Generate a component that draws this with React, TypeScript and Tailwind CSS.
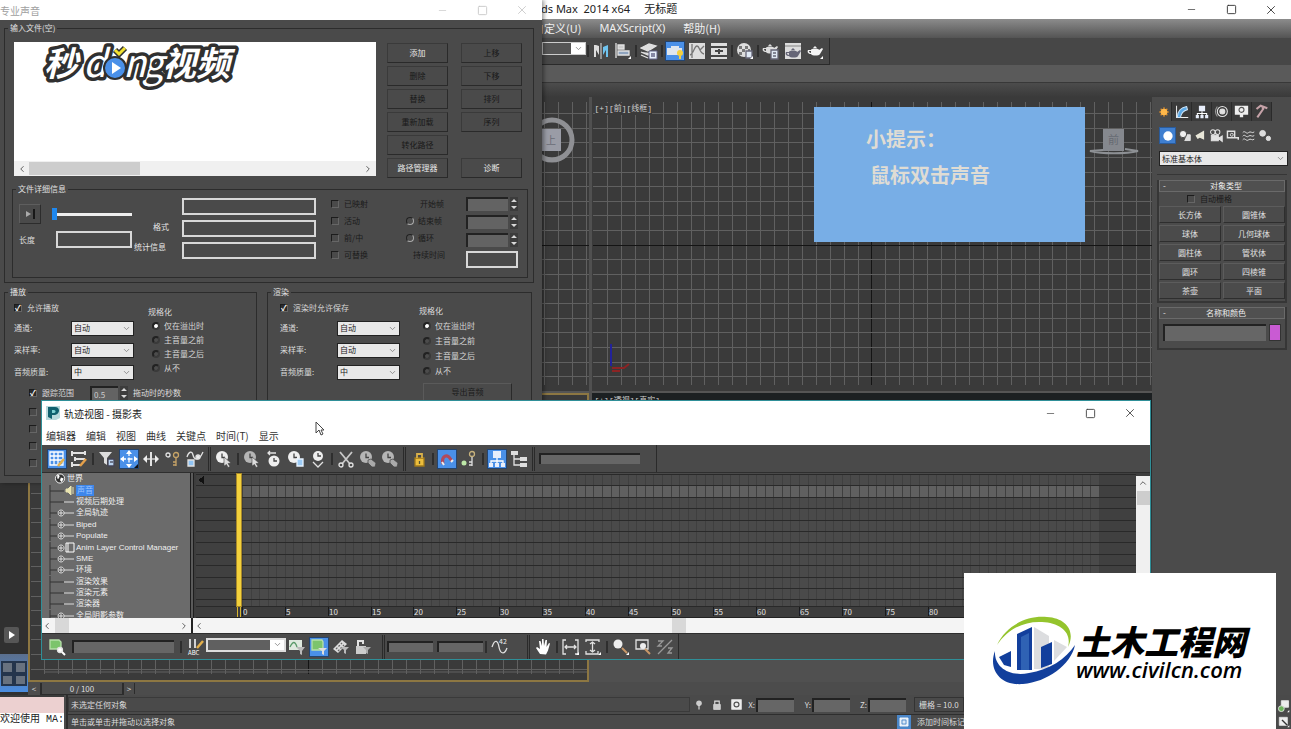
import type { ReactNode } from "react";
import { clsx } from "clsx";
import { ChevronDown, ChevronLeft, ChevronRight, ChevronUp, Minus, Square, X } from "lucide-react";

// ---------------------------------------------------------------------------
// Shared controls
// ---------------------------------------------------------------------------

function Icon({ children, size = 18 }: { children: ReactNode; size?: number }) {
  return (
    <svg width={size} height={size} viewBox="0 0 18 18" fill="none" stroke="#e2e2e2" strokeWidth="1.3" className="shrink-0">
      {children}
    </svg>
  );
}

function ToolButton({ label, active, children }: { label: string; active?: boolean; children: ReactNode }) {
  return (
    <button aria-label={label} title={label} className="flex h-5 w-[22px] shrink-0 items-center justify-center">
      <span className={clsx("flex h-5 w-5 items-center justify-center", active && "border border-[#24446e] bg-[#4a90e8]")}>
        {children}
      </span>
    </button>
  );
}

function Sep({ tight }: { tight?: boolean }) {
  return <span className={clsx("h-3 w-[2px] shrink-0 bg-[#2e2e2e]", tight ? "mx-[1px]" : "mx-[2px]")} />;
}

function Grip() {
  return <span className="mx-[2px] h-6 w-[3px] shrink-0 border-x border-[#2a2a2a]" />;
}

function Check({ label, checked, dim }: { label: string; checked?: boolean; dim?: boolean }) {
  return (
    <label className={clsx("flex items-center gap-[5px] whitespace-nowrap", dim ? "text-[#1a1a1a]" : "text-[#d6d6d6]")}>
      <input
        type="checkbox"
        defaultChecked={checked}
        aria-label={label || "选项"}
        className="flex h-[8px] w-[8px] shrink-0 appearance-none items-center justify-center border border-r-[#666] border-b-[#666] border-t-[#1c1c1c] border-l-[#1c1c1c] text-[8px] leading-none font-bold text-white checked:bg-[#2b2b2b] checked:after:content-['✓']"
      />
      {label}
    </label>
  );
}

function Radio({ name, label, checked, dim }: { name: string; label: string; checked?: boolean; dim?: boolean }) {
  return (
    <label className={clsx("flex items-center gap-1 whitespace-nowrap", dim ? "text-[#1a1a1a]" : "text-[#d6d6d6]")}>
      <input
        type="radio"
        name={name}
        defaultChecked={checked}
        className={clsx(
          "h-[8px] w-[8px] shrink-0 appearance-none rounded-full checked:bg-white",
          dim
            ? "border border-[#aaa] border-t-[#222] border-l-[#222] bg-[#4c4c4c]"
            : "border-2 border-[#3a3a3a] border-t-[#222] border-l-[#222] bg-[#4c4c4c]",
        )}
      />
      {label}
    </label>
  );
}

function Select({ label, value, className }: { label: string; value: string; className?: string }) {
  return (
    <span className={clsx("relative flex border border-[#222] bg-[#e8e8e8] text-[#222]", className)}>
      <select aria-label={label} className="w-full appearance-none pl-[2px]">
        <option>{value}</option>
      </select>
      <ChevronDown size={9} className="pointer-events-none absolute right-[2px] top-[2px] text-[#777]" />
    </span>
  );
}

function Box({ label, className }: { label: string; className?: string }) {
  return <input aria-label={label} className={clsx("border-t-2 border-l-2 border-[#222] bg-[#666]", className)} />;
}

function Spinner({ label, value, className }: { label: string; value?: string; className?: string }) {
  return (
    <span className="flex items-center gap-[2px]">
      <input
        aria-label={label}
        defaultValue={value}
        className={clsx("h-[14px] border-t-2 border-l-2 border-[#222] bg-[#636363] pl-[2px] text-[#ccc]", className)}
      />
      <svg width="8" height="14" viewBox="0 0 8 14" fill="#d8d8d8">
        <path d="M0 0h8v14H0Z" fill="#3c3c3c" />
        <path d="M4 2 7 5H1ZM4 12 1 9h6Z" />
      </svg>
    </span>
  );
}

function Group({ title, className, children }: { title: string; className?: string; children: ReactNode }) {
  return (
    <fieldset className={clsx("border border-[#2c2c2c]", className)}>
      <legend className="ml-[3px] px-[2px] leading-[12px] text-[#e0e0e0]">{title}</legend>
      {children}
    </fieldset>
  );
}

function WindowButtons({ className }: { className: string }) {
  return (
    <div className={clsx("flex items-center", className)}>
      <button aria-label="最小化" className="flex w-[40px] justify-center"><Minus size={11} strokeWidth={1.5} /></button>
      <button aria-label="最大化" className="flex w-[40px] justify-center"><Square size={11} strokeWidth={2} /></button>
      <button aria-label="关闭" className="flex w-[40px] justify-center"><X size={14} strokeWidth={1.5} /></button>
    </div>
  );
}

// ---------------------------------------------------------------------------
// Glyphs
// ---------------------------------------------------------------------------

const corner = <path d="M17 14v3h-3Z" fill="#fff" stroke="none" />;

function Clock({ dim, children }: { dim?: boolean; children?: ReactNode }) {
  return (
    <Icon>
      <circle cx="7" cy="7" r="6" fill={dim ? "#b5b5b5" : "#f0f0f0"} stroke="none" />
      <path d="M7 3.500V7.500H10" stroke="#444" />
      {children}
    </Icon>
  );
}

const pointer = <path d="m9 7 7 6-3 .5 2 3-2 1-1.500-3L9 16Z" fill="#ddd" stroke="#444" strokeWidth=".6" />;
const link = <path d="m9 10 3-1 5 4-1 4h-3l-4-4Z" fill="#aaa" stroke="#444" strokeWidth=".7" />;

const Teapot = ({ fill = "#ddd" }: { fill?: string }) => (
  <path
    d="M5 8c0-2 8-2 8 0l3-2 1 1-3 5c-1 2-8 2-9 0C2 12 1 10 2 8Zm-2 1c0 1 1 2 2 2V9Zm4-3 2-2 2 2Z"
    fill={fill}
    stroke="none"
  />
);

const Hierarchy = ({ size = 18 }: { size?: number }) => (
  <Icon size={size}>
    <path d="M9 8v3M3 14v-3h12v3M9 11v3" stroke="#fff" />
    <path d="M5 1h8v7H5ZM1 13h4v4H1ZM7 13h4v4H7ZM13 13h4v4h-4Z" fill="#e8eefb" stroke="none" />
  </Icon>
);

// ---------------------------------------------------------------------------
// Viewports
// ---------------------------------------------------------------------------

interface GridProps {
  x0: number;
  y0: number;
  axisX?: number;
  axisY?: number;
}

function GridLines({ x0, y0, axisX, axisY }: GridProps) {
  const lines = Array.from({ length: 41 }, (_, i) => i);
  return (
    <svg className="absolute inset-0 h-full w-full" shapeRendering="crispEdges">
      {lines.map((i) => {
        const x = Math.round(x0 + i * 13.92);
        return <line key={i} x1={x} x2={x} y1="5" y2="98%" stroke={i === axisX ? "#141414" : "#606060"} />;
      })}
      {lines.slice(0, 21).map((i) => {
        const y = Math.round(y0 + i * 14.63);
        return <line key={i} x1="1" x2="100%" y1={y} y2={y} stroke={i === axisY ? "#141414" : "#606060"} />;
      })}
    </svg>
  );
}

function Viewports() {
  return (
    <div className="grid min-h-0 flex-1 grid-cols-2 grid-rows-[296fr_289fr] gap-x-[3px] bg-[#505050]">
      <div className="relative overflow-hidden border-b-2 border-[#555] bg-[#3a3a3a]">
        <GridLines x0={15} y0={16} axisY={9} />
        <svg className="absolute top-[20px] right-[14px]" width="46" height="46" viewBox="0 0 46 46">
          <circle cx="23" cy="23" r="20" fill="none" stroke="#8f9094" strokeWidth="5" />
          <rect x="11" y="12" width="21" height="22" fill="#9a9ca6" />
          <text x="17" y="27" fontSize="10" fill="#6a6c76">上</text>
        </svg>
      </div>
      <div className="relative overflow-hidden border-b-2 border-[#555] bg-[#3a3a3a]">
        <GridLines x0={15} y0={16} axisX={19} axisY={9} />
        <p className="relative mt-[6px] ml-[3px] w-fit bg-[#3a3a3a] font-['Liberation_Mono','Noto_Sans_CJK_SC',monospace] text-[8px] leading-[12px] text-[#cfcfcf]">
          [+][前][线框]
        </p>
        <svg className="absolute bottom-[18px] left-[14px]" width="28" height="30" viewBox="0 0 28 30" fill="none">
          <path d="M5 1v22" stroke="#22229a" strokeWidth="2" />
          <path d="M6 25h12l5-4M6 28h8" stroke="#8c2424" strokeWidth="2" />
        </svg>
        <svg className="absolute top-[30px] right-[12px]" width="52" height="28" viewBox="0 0 52 28">
          <rect x="15" y="2" width="21" height="22" fill="#85888e" />
          <text x="20" y="17" fontSize="11" fill="#666a72">前</text>
          <path d="M15 23 2 24c12 3 36 3 48 0l-13-2" fill="none" stroke="#8d9094" strokeWidth="2" />
        </svg>
      </div>
      <div className="relative overflow-hidden border-2 border-[#8d7742] bg-[#3a3a3a]">
        <GridLines x0={14} y0={25} axisX={19} />
        <svg className="absolute inset-x-0 bottom-0 h-[20px] w-full">
          <path d="M14 12H560" stroke="#606060" />
        </svg>
      </div>
      <div className="overflow-hidden bg-[linear-gradient(#1c2022_8px,#505050_260px)] pl-[3px]">
        <p className="font-['Liberation_Mono','Noto_Sans_CJK_SC',monospace] text-[8px] leading-[16px] text-[#cfcfcf]">
          [+][透视][真实]
        </p>
      </div>
    </div>
  );
}

// ---------------------------------------------------------------------------
// Command panel on the right
// ---------------------------------------------------------------------------

const PRIMITIVES = ["长方体", "圆锥体", "球体", "几何球体", "圆柱体", "管状体", "圆环", "四棱锥", "茶壶", "平面"];

function Rollout({ title, children }: { title: string; children: ReactNode }) {
  return (
    <section className="relative border-x-2 border-b-2 border-[#363636] pb-[2px]">
      <h2 className="flex h-[12px] items-center border border-[#6a6a6a] bg-[#505050] px-[3px] leading-[10px] text-[#ededed]">
        <span className="w-2">-</span>
        <span className="flex-1 text-center">{title}</span>
      </h2>
      {children}
    </section>
  );
}

function PanelTab({ label, active, children }: { label: string; active?: boolean; children: ReactNode }) {
  return (
    <button
      aria-label={label}
      className={clsx("flex items-center justify-center border-r border-[#2a2a2a]", active ? "w-[15px] bg-[#4b4b4b]" : "w-5 bg-[#3b3b3b]")}
    >
      {children}
    </button>
  );
}

function CommandPanel() {
  return (
    <aside className="flex w-[139px] shrink-0 flex-col bg-[#4b4b4b] pt-[5px] pr-[4px] pl-[5px]">
      <div className="flex h-[19px]">
        <PanelTab label="创建" active>
          <Icon size={12}>
            <path d="M9 2v14M2 9h14M4 4l10 10M14 4 4 14" stroke="#d98a2a" strokeWidth="2" />
            <circle cx="9" cy="9" r="5" fill="#ffb84a" stroke="none" />
          </Icon>
        </PanelTab>
        <PanelTab label="修改">
          <Icon size={14}>
            <path d="M2 1v15h15" stroke="#eee" />
            <path d="M3 16C3 8 8 3 15 2l1 4c-4 1-8 4-9 10Z" fill="#5aa8e6" stroke="#cfe4f7" />
          </Icon>
        </PanelTab>
        <PanelTab label="层次"><Hierarchy size={14} /></PanelTab>
        <PanelTab label="运动">
          <Icon size={15}>
            <circle cx="10" cy="9" r="6" />
            <circle cx="10" cy="9" r="3" fill="#e2e2e2" />
            <path d="M4 3c-3 4-3 8 0 12" stroke="#999" />
          </Icon>
        </PanelTab>
        <PanelTab label="显示">
          <Icon size={15}>
            <path d="M1 2h16v11h-6v3H7v-3H1Z" fill="#eee" stroke="none" />
            <circle cx="9" cy="7" r="3" stroke="#555" />
          </Icon>
        </PanelTab>
        <PanelTab label="工具">
          <Icon size={15}>
            <path d="m3 6 5-4 8 3M10 4l1 2L4 16" stroke="#c5a2a8" strokeWidth="2.500" />
          </Icon>
        </PanelTab>
      </div>

      <div className="mt-[6px] ml-[2px] flex">
        <button aria-label="几何体" className="flex h-[17px] w-[17px] items-center justify-center border border-[#2a5b9b] bg-[#3f7fd0]">
          <Icon size={14}><circle cx="9" cy="9" r="6" fill="#fff" stroke="none" /></Icon>
        </button>
        <button aria-label="图形" className="flex w-[16px] items-center justify-center">
          <Icon size={13}><path d="M12 8h5v8H9" fill="#ddd" /><circle cx="7" cy="7" r="5" fill="#eee" stroke="#444" /></Icon>
        </button>
        <button aria-label="灯光" className="flex w-[16px] items-center justify-center">
          <Icon size={13}><path d="M2 9 14 2v13L8 12l-3 2Z" fill="#e8e6d8" stroke="none" /></Icon>
        </button>
        <button aria-label="摄影机" className="flex w-[16px] items-center justify-center">
          <Icon size={14}><circle cx="5" cy="4" r="3" /><circle cx="11" cy="4" r="3" /><path d="M3 8h9v7H3Zm9 4 5-3v7Z" fill="#e2e2e2" /></Icon>
        </button>
        <button aria-label="辅助对象" className="flex w-[16px] items-center justify-center">
          <Icon size={13}><path d="M2 3h10v9H2Zm5 9h10v3" strokeWidth="2" /><circle cx="8" cy="8" r="2" /></Icon>
        </button>
        <button aria-label="空间扭曲" className="flex w-[17px] items-center justify-center">
          <Icon size={13}><path d="M1 5c3-4 5 3 8 0s5 2 8-1M1 10c3-4 5 3 8 0s5 2 8-1M1 15c3-4 5 3 8 0s5 2 8-1" /></Icon>
        </button>
        <button aria-label="系统" className="flex w-[16px] items-center justify-center">
          <Icon size={13}><circle cx="5" cy="6" r="4" fill="#ddd" /><circle cx="13" cy="13" r="3" fill="#ddd" /></Icon>
        </button>
      </div>

      <Select label="对象类别" value="标准基本体" className="mt-[7px] ml-[2px] h-[15px] w-[129px] shrink-0" />
      <hr className="mt-2 mb-[5px] border-[#363636]" />

      <Rollout title="对象类型">
        <div className="flex h-[14px] items-center pl-[28px]"><Check label="自动栅格" dim /></div>
        <div className="grid grid-cols-2 gap-x-[2px] gap-y-[2px]">
          {PRIMITIVES.map((name) => (
            <button key={name} className="h-[17px] border border-t-[#5c5c5c] border-r-[#2e2e2e] border-b-[#2e2e2e] border-l-[#5c5c5c] text-[#e0e0e0]">
              {name}
            </button>
          ))}
        </div>
      </Rollout>
      <div className="mt-[4px]">
        <Rollout title="名称和颜色">
          <div className="flex items-center justify-between px-1 py-[5px]">
            <Box label="名称" className="h-[17px] w-[103px]" />
            <button aria-label="颜色" className="h-[17px] w-[12px] border border-[#333] bg-[#c95bd3]" />
          </div>
        </Rollout>
      </div>
    </aside>
  );
}

// ---------------------------------------------------------------------------
// Main window
// ---------------------------------------------------------------------------

function MainToolbar() {
  return (
    <div className="flex h-[27px] items-center bg-[#474747] pl-[542px]">
      <div className="flex h-[27px] items-center border-r border-b border-[#2a2a2a] pr-[3px]">
        <span className="relative mb-[6px] flex h-[13px] w-[44px] border border-[#ccc] bg-[#555]">
          <select aria-label="命名选择集" className="w-full appearance-none"><option> </option></select>
          <span className="pointer-events-none absolute inset-y-0 right-0 flex w-[14px] items-center justify-center bg-white text-[#777]">
            <ChevronDown size={9} />
          </span>
        </span>
        <Sep tight />
        <ToolButton label="镜像">
          <Icon><path d="M2 3v12h2V8l3 5V4L4 3Z" fill="#ddd" stroke="none" /><path d="M16 3v12h-2V8l-3 5V5Z" fill="#6fc3ee" stroke="none" /><path d="M9 1v16" stroke="#bbb" /></Icon>
        </ToolButton>
        <ToolButton label="对齐">
          <Icon><path d="M2 1v15" /><path d="M4 3h6v4H4Z" fill="#ccc" /><path d="M4 9h11v4H4Z" fill="#8ea3be" />{corner}</Icon>
        </ToolButton>
        <Sep tight />
        <ToolButton label="层管理器">
          <Icon><path d="m1 6 8-4 7 2-8 5ZM1 10l7 3 4-2M1 13l7 3" fill="#ddd" /><path d="M9 9h8v8H9Z" fill="#e8f0fa" stroke="#668" strokeWidth="1" /><path d="M11 12h4m-4 2h4" stroke="#668" /></Icon>
        </ToolButton>
        <Sep tight />
        <ToolButton label="功能区" active>
          <Icon><path d="M1 6h4V4h8v2h3v7H1Z" fill="#dfe6ee" stroke="none" /><circle cx="14" cy="11" r="3" fill="#f4cf3e" stroke="none" /><path d="M14 14v3" stroke="#f4cf3e" strokeWidth="2" /></Icon>
        </ToolButton>
        <ToolButton label="曲线编辑器">
          <Icon><path d="M1 1h16v16H1Z" fill="#ddd" stroke="none" /><path d="M4 2v14M2 13c4-1 4-9 7-9s2 7 7 8M12 8l4-4" stroke="#777" /></Icon>
        </ToolButton>
        <ToolButton label="图解视图">
          <Icon><path d="M1 1h16v16H1Z" fill="#ddd" stroke="none" /><path d="M1 5h16M1 14h16M9 7v5M5 9h8" stroke="#444" strokeWidth="2" /></Icon>
        </ToolButton>
        <Sep tight />
        <ToolButton label="材质编辑器">
          <Icon><circle cx="8" cy="8" r="7" fill="#ddd" stroke="none" /><path d="M3 4h3v3H3Zm6 0h3v3H9ZM6 7h3v3H6Zm6 0h2v3h-2ZM3 10h3v3H3Z" fill="#777" stroke="none" /><path d="M10 9h6v7h-6Z" fill="#dfe8f4" stroke="#667" />{corner}</Icon>
        </ToolButton>
        <Sep tight />
        <ToolButton label="渲染设置"><Icon><g transform="translate(-1 -2)"><Teapot /></g><path d="M9 8h7v9H9Z" fill="#dfe8f4" stroke="#667" /><path d="M11 11h3m-3 3h3" stroke="#667" /></Icon></ToolButton>
        <ToolButton label="渲染帧窗口"><Icon><path d="M1 1h16v16H1Z" fill="#ddd" stroke="none" /><path d="M1 4h16" stroke="#999" /><g transform="translate(0 2)"><Teapot fill="#667" /></g></Icon></ToolButton>
        <ToolButton label="渲染产品"><Icon><Teapot fill="#f4f4f4" />{corner}</Icon></ToolButton>
      </div>
    </div>
  );
}

function StatusBar() {
  return (
    <footer className="flex h-[34px] shrink-0 bg-[#4a4a4a] text-[#dcdcdc]">
      <div className="flex w-[64px] flex-col border-t-2 border-[#3a3a3a]">
        <div className="h-[16px] bg-[#ecd0d0]" />
        <p className="h-[16px] bg-white font-['Liberation_Mono','Noto_Sans_CJK_SC',monospace] text-[10px] leading-[14px] whitespace-nowrap text-[#222]">
          欢迎使用 MA:
        </p>
      </div>
      <div className="ml-[2px] flex flex-1 flex-col border-l-2 border-[#2e2e2e]">
        <div className="flex h-[20px] items-center border-b border-[#2e2e2e]">
          <p className="h-[15px] w-[622px] border border-[#3a3a3a] pl-[2px] leading-[13px]">未选定任何对象</p>
          <span className="flex w-[56px] items-center justify-around">
            <Icon size={10}><circle cx="9" cy="6" r="5" fill="#ccc" stroke="none" /><path d="M9 9v8" strokeWidth="2" /></Icon>
            <Icon size={10}><path d="M3 8h12v9H3Z" fill="#ccc" /><path d="M5 8V2h8v6" strokeWidth="2" /></Icon>
            <Icon size={11}><path d="M1 1h16v16H1Z" fill="#eee" /><circle cx="9" cy="9" r="4" stroke="#555" strokeWidth="2" /></Icon>
          </span>
          {["X", "Y", "Z"].map((axis) => (
            <label key={axis} className="flex w-[56px] items-center justify-end gap-[1px] pr-[8px] text-[8px]">
              {axis}:
              <Box label={axis} className="h-[14px] w-[38px]" />
            </label>
          ))}
          <p className="h-[15px] border border-[#333] px-1 leading-[13px] whitespace-nowrap">栅格 = 10.0</p>
        </div>
        <div className="flex h-[14px] items-center">
          <p className="w-[829px] pl-[3px]">单击或单击并拖动以选择对象</p>
          <button aria-label="时间标记" className="mr-[6px] flex h-[14px] w-[14px] items-center justify-center bg-[#4a86c8]">
            <Icon size={12}><path d="M3 3h12v12H3Z" fill="#dce8f6" stroke="#fff" /><path d="M6 6h6v6H6Z" stroke="#4a86c8" /></Icon>
          </button>
          <p className="whitespace-nowrap">添加时间标记</p>
        </div>
      </div>
      <div className="flex w-[15px] flex-col items-center justify-around pt-1">
        <Icon size={13}><path d="M6 1h10v9H6Z" fill="#eee" /><circle cx="6" cy="12" r="4" fill="#6db45c" stroke="#ddd" />{corner}</Icon>
        <Icon size={12}><path d="M2 2h12v12H2Z" fill="#eee" /><path d="m6 6 8 8" stroke="#333" strokeWidth="2" />{corner}</Icon>
      </div>
    </footer>
  );
}

function MainWindow() {
  return (
    <div className="flex h-full flex-col">
      <header className="flex h-[19px] shrink-0 items-center justify-between bg-white pl-[541px] text-[#222]">
        <h1 className="font-['Noto_Sans','Noto_Sans_CJK_SC',sans-serif] text-[11px] whitespace-pre">ds Max  2014 x64     无标题</h1>
        <WindowButtons className="text-[#333]" />
      </header>
      <nav className="flex h-[19px] shrink-0 items-center gap-[18px] bg-linear-to-b from-[#8c8c8c] to-[#545454] pl-[533px] text-[11px] text-[#f0f0f0]">
        <button>自定义(U)</button>
        <button className="font-['Noto_Sans',sans-serif]">MAXScript(X)</button>
        <button>帮助(H)</button>
      </nav>
      <MainToolbar />
      <div className="h-[18px] shrink-0 border-b border-[#383838] bg-[#5a5a5a]" />
      <div className="h-[14px] shrink-0 bg-linear-to-b from-[#4c4c4c] to-[#3a3a3a]" />
      <div className="flex min-h-0 flex-1">
        <div className="flex w-[28px] shrink-0 flex-col justify-end bg-[#303030] pb-[3px]">
          <button aria-label="播放" className="mb-[11px] ml-[4px] flex h-[16px] w-[15px] items-center justify-center rounded-[2px] bg-[#565656]">
            <svg width="6" height="8" viewBox="0 0 6 8" fill="#fff"><path d="M0 0 6 4 0 8Z" /></svg>
          </button>
          <button aria-label="视口布局" className="h-[38px] bg-linear-to-b from-[#5a6f8e] to-[#4a8de0]">
            <svg width="28" height="36" viewBox="0 0 28 36" fill="#68727f" stroke="#24354c" strokeWidth="2">
              <path d="M2 7h11v11H2ZM15 7h11v11H15ZM2 20h11v10H2ZM15 20h11v10H15Z" />
            </svg>
          </button>
        </div>
        <main className="flex min-w-0 flex-1 flex-col">
          <Viewports />
          <div className="flex h-[13px] shrink-0 items-center bg-[#4c4c4c] text-[#ddd]">
            <button aria-label="上一帧" className="w-[12px] leading-[11px]">&lt;</button>
            <span className="w-[84px] border-x-2 border-b border-[#2c2c2c] text-center leading-[11px]">0 / 100</span>
            <button aria-label="下一帧" className="w-[11px] border-r border-[#2c2c2c] leading-[11px]">&gt;</button>
          </div>
        </main>
        <CommandPanel />
      </div>
      <StatusBar />
    </div>
  );
}

// ---------------------------------------------------------------------------
// "专业声音" dialog
// ---------------------------------------------------------------------------

const FILE_BUTTONS = [
  ["添加", "上移"],
  ["删除", "下移"],
  ["替换", "排列"],
  ["重新加载", "序列"],
  ["转化路径", ""],
  ["路径管理器", "诊断"],
];

const ENABLED = ["添加", "路径管理器", "诊断"];

function VideoLogo() {
  return (
    <svg className="ml-[22px] overflow-visible" width="206" height="52" viewBox="0 0 206 52" role="img" aria-label="秒dong视频">
      <g
        fill="#fff"
        stroke="#303030"
        strokeWidth="7"
        strokeLinejoin="round"
        paintOrder="stroke"
        fontStyle="italic"
        fontWeight="700"
        className="font-['Noto_Sans_CJK_SC',sans-serif]"
      >
        <text x="8" y="34" fontSize="34">秒</text>
        <text x="126" y="34" fontSize="34">视频</text>
        <text x="106" y="35" fontSize="38" fontWeight="400">g</text>
        <text x="47" y="35" fontSize="38" fontWeight="400">d</text>
        <text x="87" y="35" fontSize="38" fontWeight="400">n</text>
      </g>
      <circle cx="79" cy="26" r="11" fill="#4a90e8" stroke="#303030" strokeWidth="2" />
      <path d="m76 20 9 6-9 6Z" fill="#fff" />
      <path d="m79 8 4 4 6-6" fill="none" stroke="#303030" strokeWidth="6" />
      <path d="m79 8 4 4 6-6" fill="none" stroke="#f3e130" strokeWidth="3" />
    </svg>
  );
}

function FileDetails() {
  const readout = "border-2 border-[#d8d8d8] bg-[#4a4a4a]";
  return (
    <Group title="文件详细信息" className="mt-[5px] h-[95px] w-[516px]">
      <div className="flex pl-[6px]">
        <div className="w-[115px] pt-[9px]">
          <div className="flex items-center">
            <button aria-label="播放" className="flex h-[20px] w-[22px] items-center justify-center border border-t-[#5e5e5e] border-r-[#2c2c2c] border-b-[#2c2c2c] border-l-[#5e5e5e]">
              <svg width="11" height="10" viewBox="0 0 11 10"><path d="m1 2 5 3-5 3Z" fill="#aaa" /><path d="M8 0h2v10H8Z" fill="#181818" /></svg>
            </button>
            <input
              type="range"
              aria-label="进度"
              defaultValue={0}
              className="ml-[11px] h-[12px] w-[80px] appearance-none bg-[linear-gradient(#eee,#eee)] bg-[length:100%_3px] bg-center bg-no-repeat [&::-webkit-slider-thumb]:h-[12px] [&::-webkit-slider-thumb]:w-[5px] [&::-webkit-slider-thumb]:appearance-none [&::-webkit-slider-thumb]:bg-[#1e88f0]"
            />
          </div>
          <label className="mt-[7px] flex items-center text-[#dcdcdc]">
            <span className="w-[37px]">长度</span>
            <input className={clsx("h-[17px] w-[76px]", readout)} />
          </label>
        </div>
        <div className="flex w-[48px] flex-col gap-2 pt-[26px] leading-[12px] text-[#e6e6e6]">
          <label htmlFor="fmt" className="pl-[19px]">格式</label>
          <label htmlFor="stat">统计信息</label>
        </div>
        <div className="flex w-[134px] flex-col gap-[5px] pt-[3px]">
          <input aria-label="文件" className={clsx("h-[17px] w-full", readout)} />
          <input id="fmt" className={clsx("h-[17px] w-full", readout)} />
          <input id="stat" className={clsx("h-[17px] w-full", readout)} />
        </div>
        <div className="ml-[15px] grid w-[75px] auto-rows-[17px] items-center">
          <Check label="已映射" dim />
          <Check label="活动" dim />
          <Check label="前/中" dim />
          <Check label="可替换" dim />
        </div>
        <div className="grid w-[60px] auto-rows-[17px] items-center text-[#1a1a1a]">
          <span className="pl-[14px]">开始帧</span>
          <Radio name="range" label="结束帧" dim />
          <Radio name="range" label="循环" dim />
          <span className="pl-[7px]">持续时间</span>
        </div>
        <div className="flex flex-col gap-1 pt-[2px]">
          <Spinner label="开始帧" className="w-[42px]" />
          <Spinner label="结束帧" className="w-[42px]" />
          <Spinner label="循环" className="w-[42px]" />
          <input aria-label="持续时间" className={clsx("h-[17px] w-[52px]", readout)} />
        </div>
      </div>
    </Group>
  );
}

function AudioSettings({ check, name }: { check: string; name: string }) {
  return (
    <>
      <div className="flex h-[19px] items-center"><Check label={check} checked /></div>
      {[["通道:", "自动"], ["采样率:", "自动"], ["音频质量:", "中"]].map(([label, value]) => (
        <div key={label} className="flex h-[22px] items-center text-[#dcdcdc]">
          <span className="w-[57px]">{label}</span>
          <Select label={`${name} ${label}`} value={value} className="h-[15px] w-[63px]" />
        </div>
      ))}
    </>
  );
}

function Normalize({ name, rows }: { name: string; rows: string }) {
  return (
    <div className={clsx("grid items-center", rows)}>
      <span className="-ml-[4px] text-[#dcdcdc]">规格化</span>
      <Radio name={name} label="仅在溢出时" checked />
      <Radio name={name} label="主音量之前" />
      <Radio name={name} label="主音量之后" />
      <Radio name={name} label="从不" />
    </div>
  );
}

function SoundDialog() {
  return (
    <section className="absolute top-0 left-0 h-[483px] w-[542px] bg-[#4a4a4a] shadow-[2px_0_4px_#0006]">
      <header className="flex h-[20px] items-center justify-between bg-white text-[10px] text-[#a0a0a0]">
        <h2>专业声音</h2>
        <WindowButtons className="text-[#c8c8c8]" />
      </header>
      <div className="pt-[2px] pl-[4px]">
        <Group title="输入文件(空)" className="w-[530px] pb-1">
          <div className="flex pt-2 pl-[9px]">
            <div className="flex h-[134px] w-[362px] flex-col justify-between bg-white">
              <VideoLogo />
              <div className="flex h-[15px] items-center justify-between bg-[#f0f0f0] px-[3px] text-[#444]">
                <ChevronLeft size={10} />
                <span className="ml-[2px] h-[13px] w-[111px] bg-[#cdcdcd]" />
                <ChevronRight size={10} className="ml-auto" />
              </div>
            </div>
            <div className="ml-[11px] grid grid-cols-[61px_61px] gap-x-[13px] gap-y-[3px] pt-[1px]">
              {FILE_BUTTONS.flat().map((text, i) =>
                text ? (
                  <button
                    key={text}
                    className={clsx(
                      "h-[20px] border border-t-[#3a3a3a] border-r-[#2a2a2a] border-b-[#2a2a2a] border-l-[#3a3a3a]",
                      ENABLED.includes(text) ? "text-[#e8e8e8]" : "text-[#181818]",
                    )}
                  >
                    {text}
                  </button>
                ) : (
                  <span key={i} />
                ),
              )}
            </div>
          </div>
          <div className="pl-[7px]"><FileDetails /></div>
        </Group>

        <div className="mt-[3px] flex gap-[10px]">
          <Group title="播放" className="h-[190px] w-[253px]">
            <div className="flex pl-[9px]">
              <div className="w-[134px]"><AudioSettings check="允许播放" name="播放" /></div>
              <div className="pt-[7px] pl-[4px]"><Normalize name="play" rows="auto-rows-[14px]" /></div>
            </div>
            <div className="flex h-[20px] items-center pl-[24px]">
              <div className="w-[61px]"><Check label="跟踪范围" checked /></div>
              <Spinner label="秒数" value="0.5" className="w-[28px]" />
              <span className="ml-[5px] text-[#dcdcdc]">拖动时的秒数</span>
            </div>
            <div className="grid auto-rows-[17px] items-center pl-[24px]">
              <Check label="" /><Check label="" /><Check label="" /><Check label="" />
            </div>
          </Group>
          <Group title="渲染" className="h-[190px] w-[265px]">
            <div className="flex pl-[12px]">
              <div className="w-[134px]"><AudioSettings check="渲染时允许保存" name="渲染" /></div>
              <div className="pt-[5px] pl-[9px]">
                <Normalize name="render" rows="auto-rows-[15px]" />
                <button className="mt-[5px] h-[18px] w-[89px] border border-t-[#5a5a5a] border-r-[#2a2a2a] border-b-[#2a2a2a] border-l-[#5a5a5a] text-[#1a1a1a]">
                  导出音频
                </button>
              </div>
            </div>
          </Group>
        </div>
      </div>
    </section>
  );
}

// ---------------------------------------------------------------------------
// Track view (dope sheet)
// ---------------------------------------------------------------------------

const TREE: { text: string; expand?: boolean; layer?: boolean }[] = [
  { text: "视频后期处理" },
  { text: "全局轨迹", expand: true },
  { text: "Biped", expand: true },
  { text: "Populate", expand: true },
  { text: "Anim Layer Control Manager", expand: true, layer: true },
  { text: "SME", expand: true },
  { text: "环境", expand: true },
  { text: "渲染效果" },
  { text: "渲染元素" },
  { text: "渲染器" },
  { text: "全局阴影参数", expand: true },
];

function TrackTree() {
  return (
    <div className="w-[148px] shrink-0 overflow-hidden bg-[#6b6b6b] text-[#f0f0f0]">
      <ul className="flex h-[148px] flex-col pl-[6px] font-['Liberation_Sans','Noto_Sans_CJK_SC',sans-serif] leading-[11px]">
        <li className="flex min-h-0 flex-1 items-center gap-[1px] pl-[6px]">
          <svg width="12" height="11" viewBox="0 0 12 12"><circle cx="6" cy="6" r="5" fill="#333" stroke="#fff" /><path d="M3 2c3 0 3 2 2 3s0 2-2 1ZM7 5l3 1-2 4-2-2Z" fill="#fff" /></svg>
          世界
        </li>
        <li className="flex min-h-0 flex-1 items-center gap-[1px]">
          <svg width="27" height="11" viewBox="0 0 27 11" stroke="#333" fill="none"><path d="M2 0v11M2 6h14" /><path d="M18 4h2l3-3v9l-3-3h-2ZM25 2v7" fill="#e9e4b0" stroke="#e9e4b0" /></svg>
          <span className="bg-[#3d86ea] px-[1px] text-[#9cc4ff]">声音</span>
        </li>
        {TREE.map((row) => (
          <li key={row.text} className="flex min-h-0 flex-1 items-center gap-[1px] whitespace-nowrap">
            <svg width="27" height="11" viewBox="0 0 27 11" stroke="#333" fill="none" className="shrink-0">
              <path d="M2 0v11M2 6h14" />
              {row.layer ? <path d="M18 1h8v9h-8ZM20 1v9" stroke="#fff" /> : <path d="M16 6h10" stroke="#ddd" />}
              {row.expand && <path d="M13 3a3 3 0 1 0 .1 0ZM11 6h4M13 4v4" stroke="#f0f0f0" strokeWidth=".9" fill="#555" />}
            </svg>
            {row.text}
          </li>
        ))}
      </ul>
    </div>
  );
}

const FRAME = 8.57;
const START = 46;

function Timeline() {
  const end = START + 100 * FRAME;
  return (
    <svg className="h-[145px] min-w-0 flex-1 bg-[#3d3d3d]" shapeRendering="crispEdges">
      <rect x="0" y="0" width="100%" height="133" fill="#404040" />
      <rect x={START} y="0" width={end - START} height="133" fill="#4a4a4a" />
      <rect x={START} y="12" width={end - START} height="12" fill="#606060" />
      {Array.from({ length: 101 }, (_, i) => (
        <line key={i} x1={Math.round(START + i * FRAME)} x2={Math.round(START + i * FRAME)} y1="2" y2="133" stroke="#3f3f3f" />
      ))}
      {[1, 12, 24, 35, 47, 58, 69, 81, 92, 104, 115, 126, 133].map((y) => (
        <line key={y} x1="0" x2="100%" y1={y} y2={y} stroke="#292929" />
      ))}
      <path d="M2 7 8 3v8Z" fill="#111" />
      {Array.from({ length: 21 }, (_, i) => {
        const x = Math.round(START + i * 5 * FRAME);
        return (
          <g key={i}>
            <line x1={x} x2={x} y1="134" y2="143" stroke="#1a1a1a" />
            <text x={x + 1} y="142" fontSize="8" fill="#e0e0e0">{i * 5}</text>
          </g>
        );
      })}
      <line x1="0" x2="100%" y1="144" y2="144" stroke="#222" />
      <rect x="40" y="0" width="5" height="133" fill="#f3d13c" stroke="#a8892a" />
      <path d="M41 134v10M44 134v10" stroke="#d8b52e" />
    </svg>
  );
}

function TrackToolbar() {
  return (
    <div className="flex h-[28px] shrink-0 items-center border-b border-[#2e2e2e] bg-[#4a4a4a] pl-[4px]">
      <ToolButton label="编辑关键点" active>
        <Icon><path d="M2 2h13v13H2ZM2 6h13M2 10h13M6 2v13M10 2v13" stroke="#fff" /><path d="m10 16 6-7" stroke="#e5b04a" strokeWidth="2.500" /></Icon>
      </ToolButton>
      <ToolButton label="编辑范围">
        <Icon><path d="M2 1v5M2 3h13M15 1v4M5 7v4M5 9h10M2 12v5M2 15h8" strokeWidth="2" /><path d="m10 16 6-7" stroke="#e5a04a" strokeWidth="2.500" /></Icon>
      </ToolButton>
      <Sep />
      <ToolButton label="过滤器">
        <Icon><path d="M1 2h13L9 8v7l-3-2V8Z" fill="#ddd" stroke="none" /><path d="M10 9h6v7h-6Z" fill="#b9d2ef" stroke="#445" /><path d="M12 12h3" stroke="#445" /></Icon>
      </ToolButton>
      <ToolButton label="移动关键点" active>
        <Icon><path d="M9 1v16M1 9h16" stroke="#fff" strokeDasharray="5 1.500" /><path d="m9 0 3 4H6Zm0 18 3-4H6ZM0 9l4-3v6Zm18 0-4-3v6Z" fill="#fff" stroke="none" /><path d="M18 14v4h-4Z" fill="#111" stroke="none" /></Icon>
      </ToolButton>
      <ToolButton label="滑动关键点">
        <Icon><path d="M9 2v14" strokeWidth="2" /><path d="m1 9 4-4v8Zm16 0-4-4v8Z" fill="#eee" stroke="none" /><path d="M5 9h8" /></Icon>
      </ToolButton>
      <ToolButton label="添加关键点">
        <Icon><circle cx="4" cy="5" r="2" /><circle cx="12" cy="5" r="2.500" stroke="#c7a467" /><path d="M12 8v8M12 12h-3M12 15H9" stroke="#c7a467" /></Icon>
      </ToolButton>
      <ToolButton label="缩放关键点">
        <Icon><path d="M1 7c2-6 5-6 6-2s5 8 10-3" /><path d="M2 10h6v6H2Z" fill="#8fc3f3" /><circle cx="12" cy="7" r="2" fill="#eee" /></Icon>
      </ToolButton>
      <Grip />
      <ToolButton label="选择时间"><Clock>{pointer}</Clock></ToolButton>
      <Sep />
      <ToolButton label="删除时间"><Clock dim>{pointer}</Clock></ToolButton>
      <ToolButton label="反转时间">
        <Icon><path d="M3 3h8M5 1 3 3l2 2" /><circle cx="9" cy="11" r="5.500" fill="#eee" stroke="none" /><path d="M9 8v3h3" stroke="#444" /></Icon>
      </ToolButton>
      <ToolButton label="缩放时间"><Clock><path d="M10 9h6v7h-6Z" fill="#9ccbf5" stroke="#e8f3ff" /></Clock></ToolButton>
      <ToolButton label="插入时间">
        <Icon><circle cx="9" cy="6" r="5" fill="#eee" stroke="none" /><path d="M9 3v3h3" stroke="#444" /><path d="m4 12 5 5 5-5" /></Icon>
      </ToolButton>
      <Sep />
      <ToolButton label="剪切时间">
        <Icon><path d="m3 2 10 12M15 2 5 14" stroke="#c8c8c8" strokeWidth="1.800" /><circle cx="4" cy="15" r="2" /><circle cx="14" cy="15" r="2" /></Icon>
      </ToolButton>
      <ToolButton label="复制时间"><Clock dim>{link}</Clock></ToolButton>
      <ToolButton label="粘贴时间"><Clock dim>{link}</Clock></ToolButton>
      <Grip />
      <ToolButton label="锁定当前选择">
        <Icon><path d="M5 8h9v8H5Z" fill="#edbe3c" stroke="#a07a1c" /><path d="M7 8V4h5v4" stroke="#d9b14a" strokeWidth="1.800" /><path d="M9.500 11v3" stroke="#553" /></Icon>
      </ToolButton>
      <Sep />
      <ToolButton label="捕捉帧" active>
        <Icon><path d="M5 14C3 8 7 4 11 7l3 4" stroke="#b04a5c" strokeWidth="3" /><path d="m4 12 2 3M13 12l2-2" stroke="#eee" strokeWidth="2" /></Icon>
      </ToolButton>
      <ToolButton label="显示关键点图标">
        <Icon><circle cx="4" cy="13" r="2.500" fill="#bde8a8" stroke="none" /><circle cx="12" cy="4" r="2.500" stroke="#c7b27c" /><path d="M12 7v9M12 12H9M12 15H9" stroke="#ddd" /></Icon>
      </ToolButton>
      <Sep />
      <ToolButton label="修改子树" active><Hierarchy /></ToolButton>
      <ToolButton label="修改子对象关键点">
        <Icon><path d="M1 1h7v4H1ZM10 7h7v4h-7ZM10 13h7v4h-7Z" fill="#ddd" stroke="none" /><path d="M4 5v10h6M4 9h6" /></Icon>
      </ToolButton>
      <Grip />
      <div className="flex h-[27px] items-center border-r border-[#2a2a2a] pr-4 pl-[2px]">
        <Box label="轨迹视图名称" className="h-[11px] w-[101px]" />
      </div>
    </div>
  );
}

function TrackFooter() {
  return (
    <div className="flex h-[26px] shrink-0 items-center border-t border-[#2e2e2e] bg-[#4a4a4a] pl-[4px]">
      <ToolButton label="缩放选定对象">
        <Icon><path d="M2 2h9l2 2v7H2Z" fill="#7cc46c" stroke="#b6e0aa" /><circle cx="12" cy="12" r="2.500" fill="#fff" /><path d="m14 14 3 3" stroke="#fff" strokeWidth="2" /></Icon>
      </ToolButton>
      <Box label="按名称选择" className="ml-[4px] h-[13px] w-[102px]" />
      <span className="ml-[4px] flex"><Sep /></span>
      <ToolButton label="编辑轨迹集">
        <Icon><path d="M4 1v9M9 1v9" strokeWidth="1.800" /><path d="m11 10 6-7" stroke="#e5b04a" strokeWidth="2.500" /><text x="2" y="17" fontSize="6" fill="#fff" stroke="none">ABC</text></Icon>
      </ToolButton>
      <span className="relative mb-[4px] flex h-[14px] w-[80px] border-2 border-[#ddd] bg-[#606060]">
        <select aria-label="轨迹集" className="w-full appearance-none"><option> </option></select>
        <span className="pointer-events-none absolute inset-y-0 right-0 flex w-[14px] items-center justify-center bg-white text-[#777]">
          <ChevronDown size={9} />
        </span>
      </span>
      <ToolButton label="过滤选定轨迹">
        <Icon><path d="M1 2h13v10H1Z" fill="#dfe9df" stroke="none" /><path d="M2 9c3-6 5-6 7 0" stroke="#5a9a6a" /><path d="M8 9h9l-3 4v4l-2-1v-3Z" fill="#bbb" stroke="none" /></Icon>
      </ToolButton>
      <ToolButton label="过滤选定对象" active>
        <Icon><path d="M2 2h10l1 2v8H2Z" fill="#7cc46c" stroke="#b6e0aa" /><path d="M8 10h9l-3 3v4l-2-1v-3Z" fill="#ddd" stroke="none" /></Icon>
      </ToolButton>
      <ToolButton label="过滤动画轨迹">
        <Icon><path d="m1 11 9-9 5 4-9 9Z" fill="#ddd" stroke="none" /><path d="m4 11 6-6m-4 8 6-6" stroke="#666" strokeDasharray="2 1.500" /><path d="M9 9h8l-3 3v4l-2-1v-3Z" fill="#bbb" stroke="none" /></Icon>
      </ToolButton>
      <ToolButton label="过滤解除锁定属性">
        <Icon><path d="M2 8h10v8H2Z" fill="#ccc" stroke="none" /><path d="M4 8V3h5v3" strokeWidth="2" /><path d="M9 9h8l-3 3v4l-2-1v-3Z" fill="#aaa" stroke="none" /></Icon>
      </ToolButton>
      <span className="ml-[6px] flex"><Grip /></span>
      <Box label="关键点时间" className="h-[11px] w-[46px]" />
      <Box label="关键点值" className="ml-[4px] h-[11px] w-[46px]" />
      <Sep />
      <ToolButton label="显示统计信息">
        <Icon><path d="M1 9c3-9 6-6 7 0s5 9 8 1" /><text x="8" y="6" fontSize="7" fill="#eee" stroke="none">42</text></Icon>
      </ToolButton>
      <span className="ml-[14px] flex"><Grip /></span>
      <ToolButton label="平移">
        <Icon><path d="M6 16 2 10l1-1 3 2-1-8h1.500L8 8V1h1.500L10 8l1.500-6H13l-.5 7L15 5l1 .5-2 7-2 4Z" fill="#fff" stroke="none" /></Icon>
      </ToolButton>
      <Sep />
      <ToolButton label="水平最大化">
        <Icon><path d="M4 2H1v14h3M13 2h3v14h-3M3 9h11M5 7 3 9l2 2M12 7l2 2-2 2" />{corner}</Icon>
      </ToolButton>
      <ToolButton label="最大化显示值">
        <Icon><path d="M2 4V2h13v2M2 13v3h12v-3M8.500 4v10M6 6l2.500-2L11 6M6 12l2.500 2 2.500-2" />{corner}</Icon>
      </ToolButton>
      <Sep />
      <ToolButton label="缩放">
        <Icon><circle cx="6" cy="6" r="4.500" fill="#eee" stroke="none" /><path d="m10 10 5 5" stroke="#c99868" strokeWidth="2" />{corner}</Icon>
      </ToolButton>
      <ToolButton label="缩放区域">
        <Icon><path d="M2 2h12v9H2Z" /><circle cx="9" cy="8" r="3" fill="#eee" stroke="none" /><path d="m11 11 5 5" stroke="#c99868" strokeWidth="2" /></Icon>
      </ToolButton>
      <ToolButton label="隔离曲线">
        <Icon><path d="M2 16 16 2M2 3h5L2 8h4M12 10h4l-4 5h4" stroke="#999" /></Icon>
      </ToolButton>
      <span className="ml-[2px] h-[25px] border-r border-[#2a2a2a]" />
    </div>
  );
}

function TrackView() {
  return (
    <section className="absolute top-[400px] right-[140px] left-[41px] flex flex-col border border-[#2f8f98] bg-white">
      <header className="flex h-[24px] items-center text-[10px] text-[#222]">
        <svg width="14" height="14" viewBox="0 0 14 14" className="ml-[4px]">
          <path d="M0 0h14v12l-4 2H0Z" fill="#b9d9dc" />
          <path d="M2 1h7c6 0 5 8-1 8H6v4l-4-2Z" fill="#10606e" />
          <path d="M6 4h2c2 0 2 3 0 3H6Z" fill="#7fd0d2" />
        </svg>
        <h2 className="ml-[4px] flex-1 text-[10px]">轨迹视图 - 摄影表</h2>
        <WindowButtons className="text-[#444]" />
      </header>
      <nav className="flex h-[20px] items-center gap-[10px] pl-[4px] text-[10px] text-[#333]">
        {["编辑器", "编辑", "视图", "曲线", "关键点", "时间(T)", "显示"].map((m) => (
          <button key={m}>{m}</button>
        ))}
      </nav>
      <TrackToolbar />
      <div className="flex h-[145px] bg-[#3d3d3d]">
        <TrackTree />
        <div className="mr-[2px] w-[4px] shrink-0 border-x border-[#1e1e1e] bg-[#5a5a5a]" />
        <Timeline />
        <div className="mt-[3px] flex w-[14px] shrink-0 flex-col items-center bg-[#f0f0f0] pt-[2px] text-[#444]">
          <ChevronUp size={10} />
          <span className="mt-[3px] h-[14px] w-[13px] bg-[#cdcdcd]" />
        </div>
      </div>
      <div className="flex h-[15px] bg-[#f4f4f4] text-[#444]">
        <div className="flex w-[151px] items-center border-r-2 border-[#222]">
          <ChevronLeft size={10} />
          <span className="ml-[3px] h-[15px] w-[14px] bg-[#d8d8d8]" />
          <ChevronRight size={10} className="mr-[2px] ml-auto" />
        </div>
        <div className="grid flex-1 grid-cols-2 items-center pl-[1px]">
          <ChevronLeft size={10} />
          <span className="h-[15px] w-[14px] bg-[#d8d8d8]" />
        </div>
      </div>
      <TrackFooter />
    </section>
  );
}

// ---------------------------------------------------------------------------
// Overlays
// ---------------------------------------------------------------------------

function Tip() {
  return (
    <div className="absolute top-[107px] left-[814px] h-[135px] w-[271px] bg-[#78aee6] pt-[14px] text-[20px] leading-[36px] font-bold text-[#dfdcd4]">
      <p className="pl-[52px]">小提示：</p>
      <p className="pl-[56px]">鼠标双击声音</p>
    </div>
  );
}

function Watermark() {
  return (
    <div className="absolute right-[15px] bottom-0 flex h-[156px] w-[312px] bg-white pt-[42px] pl-[28px]">
      <svg width="84" height="72" viewBox="0 0 84 72">
        <path d="M42 12 57 21v33H42ZM62 25l13 7-13 14Z" fill="#dcdddf" />
        <path d="M7 42 19 36v16L12 50ZM25 19 40 12v43H25ZM49 32l11-5v22l-11 4Z" fill="#123f9c" />
        <path d="M29 22 37 18v37h-8Z" fill="#2f62b4" />
        <path d="M5 30C14 10 36 0 55 2c19 1 29 14 21 30C80 17 68 8 50 7 32 6 16 14 5 30Z" fill="#94c42d" />
        <path d="M3 36c-1 16 14 26 34 22 20-3 37-14 46-28-4 20-28 37-52 39C8 71-4 54 3 36Z" fill="#123f9c" />
      </svg>
      <div className="mt-[8px] text-black italic">
        <p className="text-[34px] leading-[36px] font-black whitespace-nowrap">土木工程网</p>
        <p className="font-['Open_Sans',sans-serif] text-[22px] leading-[20px] font-semibold">www.civilcn.com</p>
      </div>
    </div>
  );
}

function Cursor() {
  return (
    <svg className="absolute top-[421px] left-[315px]" width="10" height="15" viewBox="0 0 10 15">
      <path d="M1 1v11l3-3 2 5 2-1-2-4h3Z" fill="#fff" stroke="#444" />
    </svg>
  );
}

export default function App() {
  return (
    <div className="relative h-screen w-full overflow-hidden bg-[#4a4a4a] font-['Noto_Sans_CJK_SC',sans-serif] text-[8px]">
      <MainWindow />
      <SoundDialog />
      <Tip />
      <TrackView />
      <Cursor />
      <Watermark />
    </div>
  );
}
